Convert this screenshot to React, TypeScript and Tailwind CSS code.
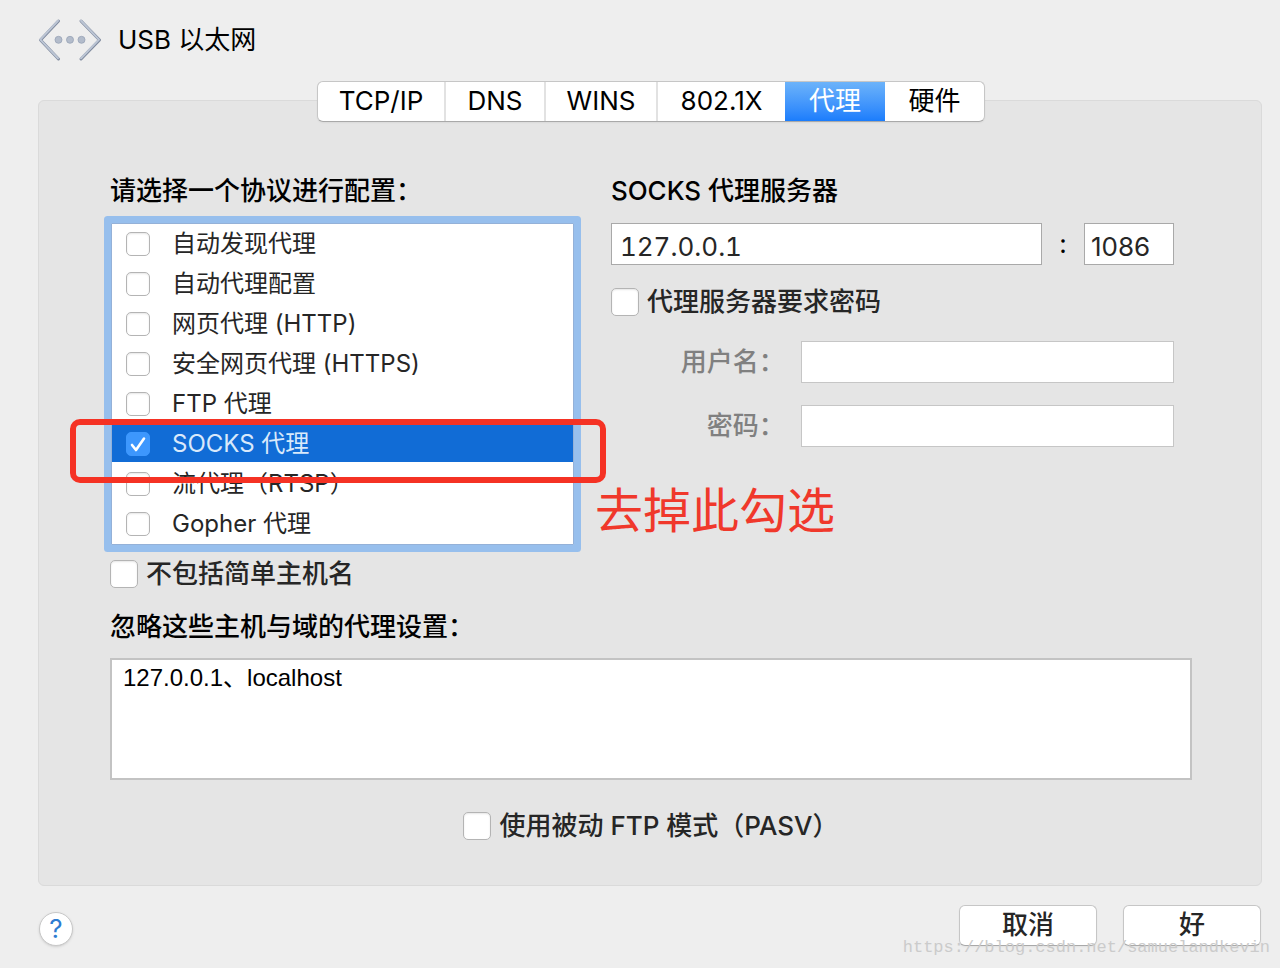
import React from "react";
import clsx from "clsx";

const tabs = [
	{ name: "TCP/IP", width: "w-[128px]" },
	{ name: "DNS", width: "w-[100px]" },
	{ name: "WINS", width: "w-[112px]" },
	{ name: "802.1X", width: "w-[127px]" },
	{ name: "代理", width: "w-[100px]" },
	{ name: "硬件", width: "w-[99px]" },
];

const protocols = [
	"自动发现代理",
	"自动代理配置",
	"网页代理 (HTTP)",
	"安全网页代理 (HTTPS)",
	"FTP 代理",
	"SOCKS 代理",
	"流代理（RTSP）",
	"Gopher 代理",
];

const selected = "SOCKS 代理";

const EthernetIcon = () => (
	<svg width="64" height="44" viewBox="0 0 64 44" fill="none">
		<g stroke="#7f8a9e" strokeWidth="3" strokeLinecap="round" strokeLinejoin="round">
			<path d="M20.500 3 2.500 22 20.500 41" />
			<path d="M43 3 61.500 22 43 41" />
		</g>
		<g stroke="#bcc5d4" strokeWidth="2" strokeLinecap="round" strokeLinejoin="round">
			<path d="M20 2.800 2.300 21.600 20 40.200" />
			<path d="M43 2.800 61 21.600 43 40.200" />
		</g>
		<g fill="#b3bccb" stroke="#97a2b5" strokeWidth="0.800">
			<circle cx="20.500" cy="21.800" r="3.500" />
			<circle cx="32" cy="21.800" r="3.500" />
			<circle cx="43.500" cy="21.800" r="3.500" />
		</g>
	</svg>
);

const Checkbox = ({ id, small, checked }: { id: string; small?: boolean; checked?: boolean }) => (
	<span className="grid shrink-0 place-items-center">
		<input
			id={id}
			type="checkbox"
			defaultChecked={checked}
			className={clsx(
				"peer col-start-1 row-start-1 appearance-none rounded-[5px] border border-[#b4b4b4] bg-white shadow-[inset_0_1px_2px_#0000001a] checked:border-[#3d97fd] checked:bg-[#3d97fd] checked:shadow-none",
				small ? "size-6" : "size-7"
			)}
		/>
		<svg
			className="pointer-events-none invisible col-start-1 row-start-1 peer-checked:visible"
			width="24"
			height="24"
			viewBox="0 0 24 24"
			fill="none"
		>
			<path d="M6 13 10 18 18 6.500" stroke="#fff" strokeWidth="2.600" strokeLinecap="round" strokeLinejoin="round" />
		</svg>
	</span>
);

const App = () => {
	return (
		<main className="relative min-h-screen bg-[#eee] pt-[18px] pr-[18px] pb-[22px] pl-[38px] font-['Inter','Noto_Sans_CJK_SC',sans-serif] text-[26px] leading-8 text-black">
			<header className="flex h-11 items-center gap-4">
				<EthernetIcon />
				<h1>USB 以太网</h1>
			</header>

			<section className="mt-[38px] rounded-md border border-[#dadada] bg-[#e5e5e5] pr-[69px] pb-[43px] pl-[71px]">
				<nav className="mx-auto -mt-5 flex h-[41px] w-fit overflow-hidden rounded-md border border-[#c6c6c6] border-b-[#a9a9a9] bg-white shadow-xs">
					{tabs.map((tab, i) => (
						<button
							key={tab.name}
							className={clsx(
								"pb-0.5 text-center",
								tab.width,
								tab.name === "代理" && "bg-linear-to-b from-[#6cb3fa] to-[#1a7dfc] text-white",
								i < 3 && "border-r-2 border-[#e2e2e2]"
							)}
						>
							{tab.name}
						</button>
					))}
				</nav>

				<div className="mt-[53px] grid grid-cols-[4fr_5fr] gap-9">
					<div className="min-w-0">
						<h2 className="font-medium">请选择一个协议进行配置：</h2>
						<div className="relative mx-px mt-4">
							<ul className="rounded-[1px] border border-[#94b1d8] bg-white text-2xl text-[#262626] ring-7 ring-[#97bfed]">
								{protocols.map((name) => (
									<li
										key={name}
										className={clsx(
											"mb-0.5 flex h-[38px] items-center gap-[22px] pt-0.5 pl-3.5",
											name === selected && "bg-[#116cd6] text-[#d9e9fb]"
										)}
									>
										<Checkbox id={name} small checked={name === selected} />
										<label htmlFor={name}>{name}</label>
									</li>
								))}
							</ul>
							{/* red callout around the selected row */}
							<div className="pointer-events-none absolute -right-8 -left-[41px] top-[196px] h-16 rounded-[10px] border-6 border-[#f53224]" />
							<p className="absolute top-[260px] left-[484px] text-5xl leading-14 whitespace-nowrap text-[#f0382b]">
								去掉此勾选
							</p>
						</div>
						<div className="mt-[13px] flex items-center gap-2 font-medium text-[#262626]">
							<Checkbox id="simple" />
							<label htmlFor="simple">不包括简单主机名</label>
						</div>
					</div>

					<div className="min-w-0 pr-[18px]">
						<h2 className="font-medium">SOCKS 代理服务器</h2>
						<div className="mt-4 flex items-center">
							<input
								aria-label="SOCKS 代理服务器"
								defaultValue="127.0.0.1"
								className="h-[42px] min-w-0 flex-1 border border-[#a9a9a9] bg-white px-2 pt-1 text-[#262626] tabular-nums"
							/>
							<span className="w-[42px] text-center">:</span>
							<input
								aria-label="端口"
								defaultValue="1086"
								className="h-[42px] w-[90px] border border-[#a9a9a9] bg-white px-1.5 pt-1 text-[#262626]"
							/>
						</div>
						<div className="mt-[21px] flex items-center gap-2 font-medium text-[#262626]">
							<Checkbox id="auth" />
							<label htmlFor="auth">代理服务器要求密码</label>
						</div>
						<div className="mt-[23px] flex items-center font-medium text-[#808080]">
							<label htmlFor="user" className="w-[190px] pr-4 text-right">
								用户名：
							</label>
							<input id="user" className="h-[42px] min-w-0 flex-1 border border-[#c6c6c6] bg-white px-2" />
						</div>
						<div className="mt-[22px] flex items-center font-medium text-[#808080]">
							<label htmlFor="password" className="w-[190px] pr-4 text-right">
								密码：
							</label>
							<input
								id="password"
								type="password"
								className="h-[42px] min-w-0 flex-1 border border-[#c6c6c6] bg-white px-2"
							/>
						</div>
					</div>
				</div>

				<label htmlFor="bypass" className="mt-[21px] block font-medium">
					忽略这些主机与域的代理设置：
				</label>
				<textarea
					id="bypass"
					defaultValue="127.0.0.1、localhost"
					className="mt-[15px] block h-[122px] w-full resize-none border-2 border-[#c3c3c3] bg-white px-[11px] py-0.5 font-['Liberation_Sans','Noto_Sans_CJK_SC',sans-serif] text-2xl leading-8"
				/>

				<div className="mt-[30px] flex items-center justify-center gap-2 font-medium text-[#262626]">
					<Checkbox id="pasv" />
					<label htmlFor="pasv">使用被动 FTP 模式（PASV）</label>
				</div>
			</section>

			<footer className="mt-[19px] flex items-end gap-[26px] px-px">
				<button
					aria-label="帮助"
					className="mr-auto size-[34px] rounded-full border border-[#c8c8c8] bg-white text-[#2e7cd1] shadow-sm"
				>
					?
				</button>
				<button className="h-[41px] w-[138px] rounded-md border border-[#c6c6c6] border-b-[#a9a9a9] bg-white pb-0.5 font-medium text-[#262626] shadow-xs">
					取消
				</button>
				<button className="h-[41px] w-[138px] rounded-md border border-[#c6c6c6] border-b-[#a9a9a9] bg-white pb-0.5 font-medium text-[#262626] shadow-xs">
					好
				</button>
			</footer>

			<p className="pointer-events-none absolute right-2.5 bottom-1 font-['Liberation_Mono',monospace] text-[17px] text-[#cbcbcb]">
				https://blog.csdn.net/samuelandkevin
			</p>
		</main>
	);
};

export default App;
